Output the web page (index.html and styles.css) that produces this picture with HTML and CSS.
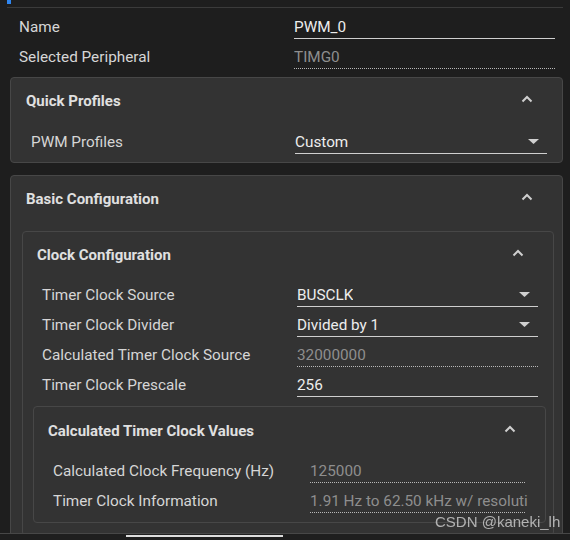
FILE: index.html
```html
<!DOCTYPE html>
<html>
<head>
<meta charset="utf-8">
<link rel="stylesheet" href="styles.css">
</head>
<body>
<div class="panel">
  <div class="tabbar"><span class="tab-mark"></span></div>
  <div class="rows rows-top">
    <div class="row"><span class="label">Name</span><div class="field edit"><span class="val">PWM_0</span></div></div>
    <div class="row"><span class="label">Selected Peripheral</span><div class="field ro"><span class="val">TIMG0</span></div></div>
  </div>

  <section class="card card-quick">
    <div class="card-head"><h3>Quick Profiles</h3><svg class="chev" viewBox="0 0 12 8" width="12" height="8"><polyline points="1.5,6.5 6,2 10.5,6.5"/></svg></div>
    <div class="rows rows-quick">
      <div class="row"><span class="label">PWM Profiles</span><div class="field edit select"><span class="val">Custom</span><svg class="tri" viewBox="0 0 11 5" width="11" height="5"><polygon points="0,0 11,0 5.5,5"/></svg></div></div>
    </div>
  </section>

  <section class="card card-basic">
    <div class="card-head"><h3>Basic Configuration</h3><svg class="chev" viewBox="0 0 12 8" width="12" height="8"><polyline points="1.5,6.5 6,2 10.5,6.5"/></svg></div>
    <section class="card card-clock">
      <div class="card-head"><h3>Clock Configuration</h3><svg class="chev" viewBox="0 0 12 8" width="12" height="8"><polyline points="1.5,6.5 6,2 10.5,6.5"/></svg></div>
      <div class="rows rows-clock">
        <div class="row"><span class="label">Timer Clock Source</span><div class="field edit select"><span class="val">BUSCLK</span><svg class="tri" viewBox="0 0 11 5" width="11" height="5"><polygon points="0,0 11,0 5.5,5"/></svg></div></div>
        <div class="row"><span class="label">Timer Clock Divider</span><div class="field edit select"><span class="val">Divided by 1</span><svg class="tri" viewBox="0 0 11 5" width="11" height="5"><polygon points="0,0 11,0 5.5,5"/></svg></div></div>
        <div class="row"><span class="label">Calculated Timer Clock Source</span><div class="field ro"><span class="val">32000000</span></div></div>
        <div class="row"><span class="label">Timer Clock Prescale</span><div class="field edit"><span class="val">256</span></div></div>
      </div>
      <section class="card card-calc">
        <div class="card-head"><h3>Calculated Timer Clock Values</h3><svg class="chev" viewBox="0 0 12 8" width="12" height="8"><polyline points="1.5,6.5 6,2 10.5,6.5"/></svg></div>
        <div class="rows rows-calc">
          <div class="row"><span class="label">Calculated Clock Frequency (Hz)</span><div class="field ro"><span class="val">125000</span></div></div>
          <div class="row"><span class="label">Timer Clock Information</span><div class="field ro"><span class="val">1.91 Hz to 62.50 kHz w/ resolution of 16.00 us</span></div></div>
        </div>
      </section>
    </section>
  </section>
</div>
<div class="hscroll"><span class="thumb"></span></div>
<div class="watermark">CSDN @kaneki_lh</div>
</body>
</html>
```

FILE: styles.css
```css
html, body {
  margin: 0;
  padding: 0;
  height: 540px;
  overflow: hidden;
}
body {
  background: #1e1e1e;
  font-family: Roboto, "Noto Sans", sans-serif;
  font-size: 15.3px;
  color: #d6d6d6;
}
.panel {
  margin: 0 7px;
}
.tabbar {
  height: 7px;
  border-bottom: 1px solid #3b3b3b;
}
.tab-mark {
  display: block;
  width: 4px;
  height: 4px;
  background: #2f86f0;
}
.rows-top {
  padding: 5px 0 0 12px;
  margin-bottom: 4px;
  --lw: 275px;
  --fw: 261px;
}
.row {
  display: grid;
  grid-template-columns: var(--lw) var(--fw);
  height: 30px;
  padding-top: 4px;
  box-sizing: border-box;
}
.label {
  line-height: 21px;
  white-space: nowrap;
}
.field {
  height: 22px;
  box-sizing: border-box;
  display: flex;
  align-items: center;
  justify-content: space-between;
}
.val {
  line-height: 21px;
  white-space: nowrap;
  overflow: hidden;
}
.edit {
  border-bottom: 1px solid #cfcfcf;
  color: #ededed;
}
.ro {
  border-bottom: 1px dotted #b8b8b8;
  color: #8e8e8e;
}
.tri {
  flex: none;
  margin-right: 8px;
  margin-bottom: 2px;
  fill: #d0d0d0;
}
.card {
  background: #333333;
  border: 1px solid #474747;
  border-radius: 4px;
}
.card-head {
  display: flex;
  align-items: center;
  justify-content: space-between;
  padding: 12px 29px 15px 15px;
}
.card-head h3 {
  margin: 0;
  font-size: 15px;
  font-weight: 700;
  line-height: 22px;
  color: #e0e0e0;
}
.chev {
  fill: none;
  stroke: #cfcfcf;
  stroke-width: 2;
  margin-bottom: 4px;
}
.card-quick {
  margin: 0 0 12px 3px;
  padding-bottom: 4px;
}
.card-quick > .card-head {
  padding-bottom: 16px;
}
.rows-quick {
  padding-left: 20px;
  --lw: 264px;
  --fw: 252px;
}
.card-basic {
  margin-left: 3px;
  padding-bottom: 20px;
}
.card-basic > .card-head {
  padding-bottom: 16px;
}
.card-clock {
  margin: 5px 8px 0 11px;
  padding-bottom: 12px;
}
.card-clock > .card-head {
  padding-left: 14px;
}
.rows-clock {
  padding-left: 19px;
  --lw: 255px;
  --fw: 241px;
}
.card-calc {
  margin: 5px 7px 0 10px;
  padding-bottom: 5px;
}
.card-calc > .card-head {
  padding: 13px 29px 15px 14px;
}
.rows-calc {
  padding-left: 19px;
  --lw: 257px;
  --fw: 215px;
}
.rows-calc .val {
  flex: none;
  max-width: 218px;
}
.hscroll {
  position: fixed;
  left: 0;
  right: 0;
  top: 533px;
  height: 7px;
  box-sizing: border-box;
  border-top: 1px solid #474747;
  background: #1e1e1e;
}
.thumb {
  position: absolute;
  left: 126px;
  top: 1px;
  width: 157px;
  height: 2px;
  background: #dcdcdc;
}
.watermark {
  position: fixed;
  left: 435px;
  top: 513px;
  font-family: "Liberation Sans", Arial, sans-serif;
  font-size: 15px;
  line-height: 17px;
  color: rgba(225, 225, 225, 0.72);
}
```
